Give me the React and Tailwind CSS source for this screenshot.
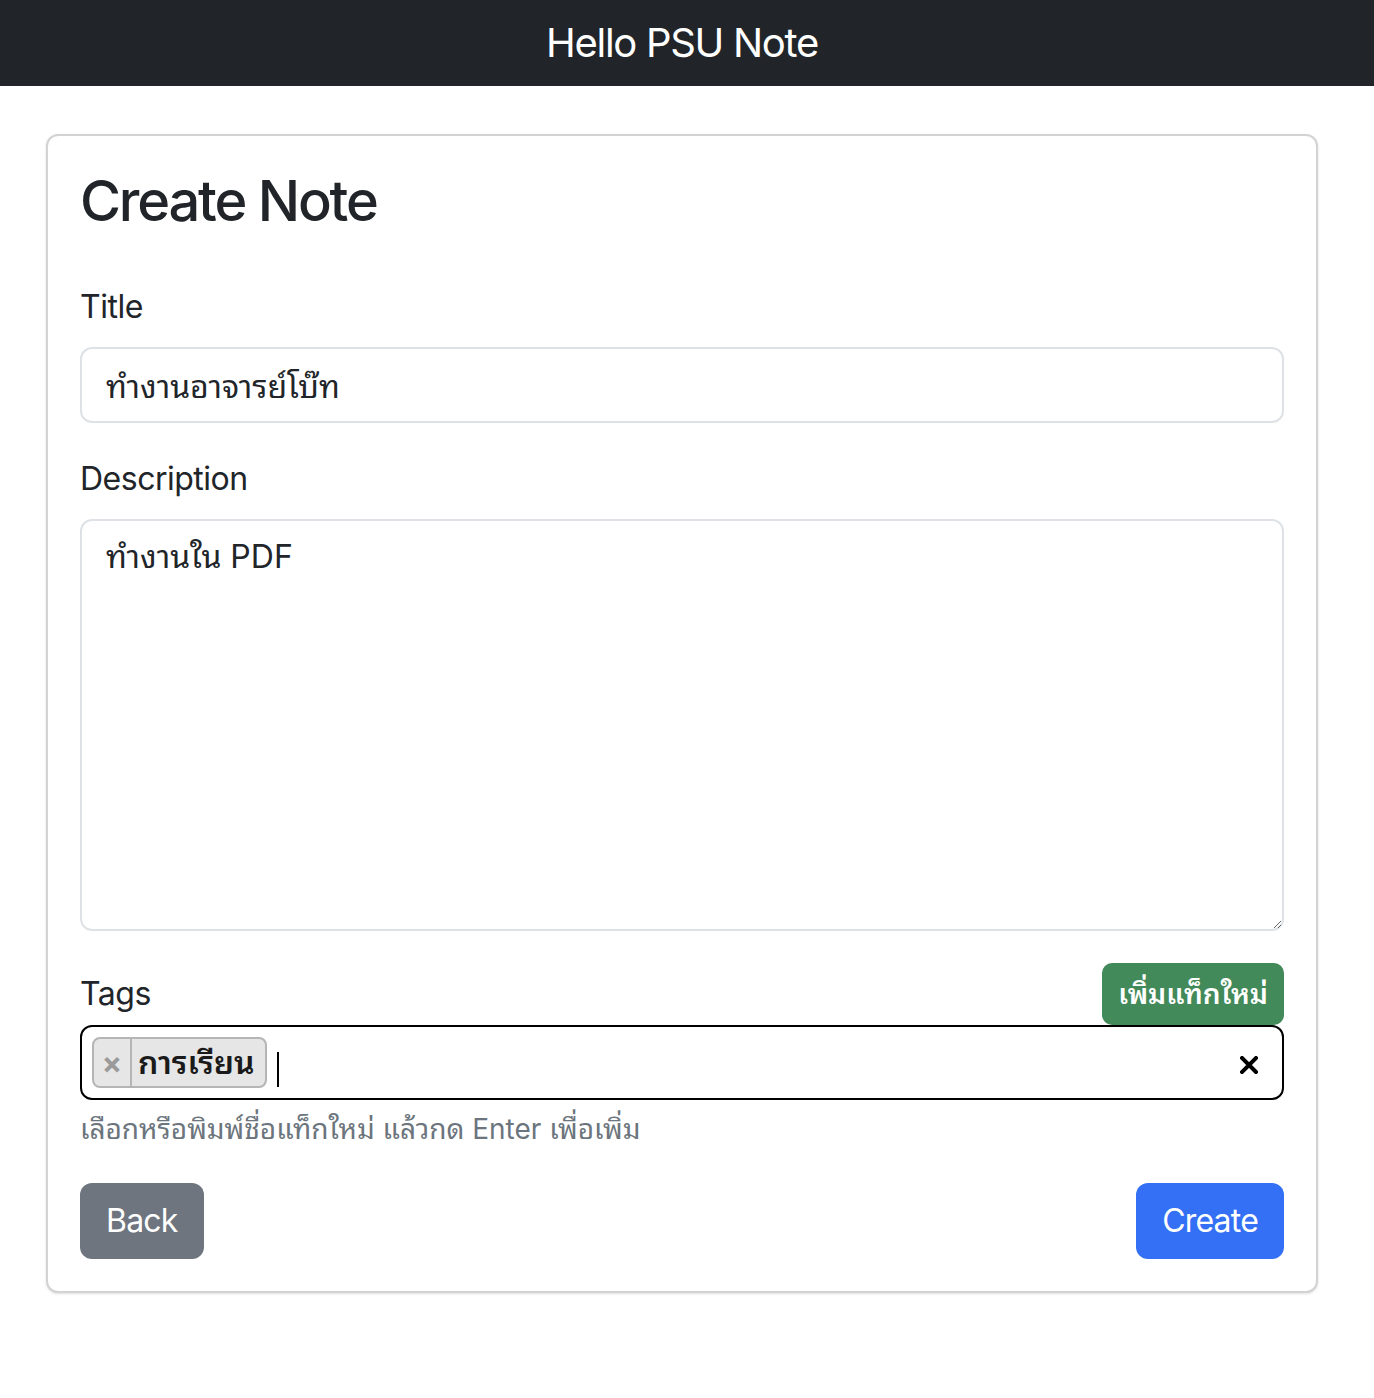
import React, { useState } from "react";

const font = {
  fontFamily:
    'Inter, "Noto Sans Thai Looped", "Noto Serif Thai", Garuda, Loma, "Tlwg Typo", Sarabun, "Noto Sans Thai", "Noto Sans", sans-serif',
};

function TagChip({ label, onRemove }) {
  return (
    <div className="flex h-[51px] items-stretch rounded-[8px] border-2 border-[#b5b5b5] bg-[#e6e6e6]">
      <button
        onClick={onRemove}
        className="flex w-[38px] items-center justify-center border-r-2 border-[#b5b5b5] text-[30px] font-bold leading-none text-[#9a9a9a]"
      >
        ×
      </button>
      <span className="flex items-center pl-[6px] pr-[10px] text-[32px] font-semibold text-[#1a1a1a]">
        {label}
      </span>
    </div>
  );
}

export default function App() {
  const [title, settitle] = useState("ทำงานอาจารย์โบ๊ท");
  const [desc, setdesc] = useState("ทำงานใน PDF");
  const [tags, settags] = useState(["การเรียน"]);

  return (
    <div className="min-h-[1398px] bg-white text-[#212529]" style={font}>
      <header className="flex h-[86px] items-center justify-center bg-[#212529]">
        <div className="mr-[10px] text-[40px] tracking-[-1.3px] text-white">Hello PSU Note</div>
      </header>

      <main className="pt-[48px] pl-[46px]">
        <div className="w-[1272px] rounded-[12px] border-2 border-[#d3d3d3] bg-white p-[32px] shadow-sm">
          <h3 className="mb-[48px] text-[56px] font-medium leading-[1.2] tracking-[-2.2px]">
            Create Note
          </h3>

          <div className="mb-[32px]">
            <label className="mb-[16px] block text-[32px] leading-[48px] tracking-[-0.5px]">Title</label>
            <input
              className="block h-[76px] w-full rounded-[12px] border-2 border-[#dee2e6] px-[24px] pb-[4px] text-[32px] outline-none"
              value={title}
              onChange={(e) => settitle(e.target.value)}
            />
          </div>

          <div className="mb-[32px]">
            <label className="mb-[16px] block text-[32px] leading-[48px] tracking-[-0.5px]">Description</label>
            <textarea
              rows={8}
              className="block h-[412px] w-full rounded-[12px] border-2 border-[#dee2e6] px-[24px] py-[12px] text-[32px] leading-[48px] outline-none"
              value={desc}
              onChange={(e) => setdesc(e.target.value)}
            />
          </div>

          <div className="flex h-[62px] items-center justify-between">
            <label className="text-[32px] leading-[48px] tracking-[-0.5px]">Tags</label>
            <button className="h-[62px] rounded-[10px] bg-[#438a5a] px-[16px] text-[28px] font-semibold text-white">
              เพิ่มแท็กใหม่
            </button>
          </div>

          <div className="flex h-[75px] items-center rounded-[12px] border-2 border-black pl-[10px] pr-[24px]">
            <div className="flex flex-1 items-center gap-[10px]">
              {tags.map((t, i) => (
                <TagChip key={i} label={t} onRemove={() => settags(tags.filter((x, j) => j !== i))} />
              ))}
              <span className="mt-[14px] h-[35px] w-[2px] bg-black"></span>
            </div>
            <svg width="18" height="18" viewBox="0 0 18 18" className="mt-[4px] shrink-0">
              <path d="M2 2 L16 16 M16 2 L2 16" stroke="black" strokeWidth="4" strokeLinecap="square" />
            </svg>
          </div>
          <div className="mt-[8px] text-[28px] leading-[42px] text-[#6c757d]">
            เลือกหรือพิมพ์ชื่อแท็กใหม่ แล้วกด Enter เพื่อเพิ่ม
          </div>

          <div className="mt-[33px] flex justify-between">
            <button className="h-[76px] rounded-[12px] bg-[#6e757e] px-[26px] text-[32px] tracking-[-0.8px] text-white">
              Back
            </button>
            <button className="h-[76px] rounded-[12px] bg-[#3370f5] px-[26px] text-[32px] tracking-[-0.8px] text-white">
              Create
            </button>
          </div>
        </div>
      </main>
    </div>
  );
}
